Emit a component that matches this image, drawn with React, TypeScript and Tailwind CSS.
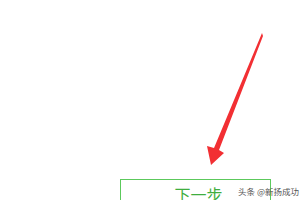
import React from 'react';

const App: React.FC = () => {
  return (
    <div className="relative h-[200px] w-[300px] overflow-hidden bg-white font-['Noto_Sans_CJK_SC',sans-serif]">
      <div className="pl-[120px] pt-[179px]">
        <div className="flex h-[32px] w-[151px] items-start justify-center border-[1.5px] border-[#5cc95c] pt-[3px]">
          <span className="pl-[6px] text-[16px] leading-[22px] text-[#3fae3f]">下一步</span>
        </div>
      </div>
      <svg className="absolute left-0 top-0" width="300" height="200" viewBox="0 0 300 200">
        <polygon
          points="262,33 263,36 219,150 224,153 211,165 207,146 214,148"
          fill="#f22f33"
        />
      </svg>
      <div className="absolute left-[238px] top-[185px] whitespace-nowrap text-[8.5px] leading-[12px] text-[#555]">
        头条 @新扬成功
      </div>
    </div>
  );
};

export default App;
